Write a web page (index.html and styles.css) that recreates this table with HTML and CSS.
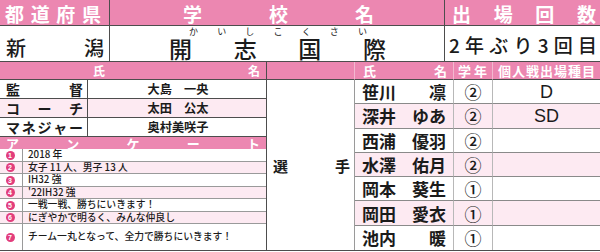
FILE: index.html
```html
<!DOCTYPE html>
<html lang="ja">
<head>
<meta charset="utf-8">
<title>出場校</title>
<link rel="stylesheet" href="styles.css">
</head>
<body>
<div class="sheet">
  <div class="top">
    <div class="hd spread pref-h"><span>都</span><span>道</span><span>府</span><span>県</span></div>
    <div class="hd spread school-h"><span>学</span><span>校</span><span>名</span></div>
    <div class="hd spread count-h last"><span>出</span><span>場</span><span>回</span><span>数</span></div>
    <div class="cell spread pref"><span>新</span><span>潟</span></div>
    <div class="cell school">
      <div class="ruby spread"><span>か</span><span>い</span><span>し</span><span>こ</span><span>く</span><span>さ</span><span>い</span></div>
      <div class="kanji spread"><span>開</span><span>志</span><span>国</span><span>際</span></div>
    </div>
    <div class="cell spread count last"><span>2</span><span>年</span><span>ぶ</span><span>り</span><span>3</span><span>回</span><span>目</span></div>
  </div>

  <div class="bottom">
    <div class="staff">
      <div class="srow shead">
        <div class="slabel"></div>
        <div class="spread sname-h"><span>氏</span><span>名</span></div>
      </div>
      <div class="srow">
        <div class="slabel spread"><span>監</span><span>督</span></div>
        <div class="sname">大島　一央</div>
      </div>
      <div class="srow alt">
        <div class="slabel spread"><span>コ</span><span>ー</span><span>チ</span></div>
        <div class="sname">太田　公太</div>
      </div>
      <div class="srow">
        <div class="slabel spread"><span>マ</span><span>ネ</span><span>ジ</span><span>ャ</span><span>ー</span></div>
        <div class="sname">奥村美咲子</div>
      </div>
      <div class="ahead spread"><span>ア</span><span>ン</span><span>ケ</span><span>ー</span><span>ト</span></div>
      <div class="items">
        <div class="item"><div class="num"><span class="badge">1</span></div><div class="itext">2018 年</div></div>
        <div class="item alt"><div class="num"><span class="badge">2</span></div><div class="itext">女子 11 人、男子 13 人</div></div>
        <div class="item"><div class="num"><span class="badge">3</span></div><div class="itext">IH32 強</div></div>
        <div class="item alt"><div class="num"><span class="badge">4</span></div><div class="itext">'22IH32 強</div></div>
        <div class="item"><div class="num"><span class="badge">5</span></div><div class="itext">一戦一戦、勝ちにいきます！</div></div>
        <div class="item alt"><div class="num"><span class="badge">6</span></div><div class="itext">にぎやかで明るく、みんな仲良し</div></div>
        <div class="item last"><div class="num"><span class="badge">7</span></div><div class="itext">チーム一丸となって、全力で勝ちにいきます！</div></div>
      </div>
    </div>

    <div class="players">
      <div class="ph ph-sel"></div>
      <div class="ph spread ph-name"><span>氏</span><span>名</span></div>
      <div class="ph spread ph-grade"><span>学</span><span>年</span></div>
      <div class="ph spread ph-event"><span>個</span><span>人</span><span>戦</span><span>出</span><span>場</span><span>種</span><span>目</span></div>

      <div class="sel spread"><span>選</span><span>手</span></div>

      <div class="pname spread"><span>笹川</span><span>凛</span></div>
      <div class="pgrade">②</div>
      <div class="pevent">D</div>

      <div class="pname spread alt"><span>深井</span><span>ゆあ</span></div>
      <div class="pgrade alt">②</div>
      <div class="pevent alt">SD</div>

      <div class="pname spread"><span>西浦</span><span>優羽</span></div>
      <div class="pgrade">②</div>
      <div class="pevent"></div>

      <div class="pname spread alt"><span>水澤</span><span>佑月</span></div>
      <div class="pgrade alt">②</div>
      <div class="pevent alt"></div>

      <div class="pname spread"><span>岡本</span><span>葵生</span></div>
      <div class="pgrade">①</div>
      <div class="pevent"></div>

      <div class="pname spread alt"><span>岡田</span><span>愛衣</span></div>
      <div class="pgrade alt">①</div>
      <div class="pevent alt"></div>

      <div class="pname spread lastrow"><span>池内</span><span>暖</span></div>
      <div class="pgrade lastrow">①</div>
      <div class="pevent lastrow"></div>
    </div>
  </div>
</div>
</body>
</html>
```

FILE: styles.css
```css
* {
  box-sizing: border-box;
  margin: 0;
  padding: 0;
}

body {
  margin: 0;
  background: #ffffff;
  font-family: "Noto Sans CJK JP", "Noto Sans", sans-serif;
  color: #1b1b1b;
}

.sheet {
  width: 600px;
  height: 252px;
}

.spread {
  display: flex;
  justify-content: space-between;
  align-items: center;
}

/* ---------- top section ---------- */
.top {
  display: grid;
  grid-template-columns: 110px 335px 155px;
  grid-template-rows: 26px 36px;
}

.top > div {
  border-right: 1px solid #4d4d4d;
  border-bottom: 1px solid #4d4d4d;
}

.top > .last {
  border-right: none;
}

.hd {
  background: #ec87b1;
  color: #ffffff;
  font-weight: 700;
  font-size: 19px;
  line-height: 1;
  padding-top: 1px;
}

.pref-h { padding-left: 5px; padding-right: 8px; }
.school-h { padding-left: 73px; padding-right: 70px; }
.count-h { padding-left: 7px; padding-right: 4px; }

.cell {
  background: #ffffff;
  line-height: 1;
}

.pref {
  font-size: 20px;
  font-weight: 500;
  padding: 8px 5px 0 6px;
}

.school {
  display: flex;
  flex-direction: column;
  padding-top: 2px;
}

.ruby {
  font-size: 9px;
  line-height: 8px;
  height: 8px;
  padding: 0 77px 0 79px;
}

.kanji {
  font-size: 23px;
  line-height: 21px;
  height: 21px;
  margin-top: 2px;
  font-weight: 500;
  padding: 0 58px 0 59px;
}

.count {
  font-size: 19px;
  font-weight: 500;
  padding: 2px 3px 0 4px;
}

/* ---------- bottom section ---------- */
.bottom {
  display: grid;
  grid-template-columns: 267px 333px;
  height: 189px;
}

.staff {
  display: grid;
  grid-template-rows: 18px 19px 19px 19px 12px 1fr;
  border-right: 1px solid #4d4d4d;
}

.srow {
  display: grid;
  grid-template-columns: 88px 1fr;
  border-bottom: 1px solid #4d4d4d;
  line-height: 1;
}

.srow.alt {
  background: #fdeaf2;
}

.shead {
  background: #ec87b1;
  color: #ffffff;
  font-weight: 700;
  font-size: 12px;
}

.sname-h {
  padding: 0 6px 0 5px;
}

.slabel {
  border-right: 1px solid #4d4d4d;
  font-size: 14px;
  font-weight: 700;
  padding: 0 4px 0 6px;
}

.shead .slabel {
  border-right: none;
}

.sname {
  display: flex;
  align-items: center;
  justify-content: center;
  font-size: 12.2px;
  font-weight: 700;
  padding-left: 2px;
}

.ahead {
  background: #ec87b1;
  color: #ffffff;
  font-weight: 700;
  font-size: 13px;
  line-height: 1;
  padding: 0 6px 0 6px;
}

.items {
  display: grid;
  grid-template-rows: 13px 12px 13px 12px 13px 12px 1fr;
  border-bottom: 1px solid #4d4d4d;
}

.item {
  display: grid;
  grid-template-columns: 23px 1fr;
  border-bottom: 1px solid #9a9a9a;
  line-height: 1;
}

.item.alt {
  background: #fdeaf2;
}

.item.last {
  border-bottom: none;
}

.num {
  display: flex;
  align-items: center;
  justify-content: center;
  border-right: 1px solid #9a9a9a;
  padding-right: 2px;
}

.badge {
  display: block;
  width: 9px;
  height: 9px;
  border-radius: 50%;
  background: #e23d7c;
  color: #ffffff;
  font-family: "Liberation Sans", sans-serif;
  font-weight: 700;
  font-size: 7px;
  line-height: 9px;
  text-align: center;
}

.itext {
  display: flex;
  align-items: center;
  padding-left: 5px;
  font-size: 9.8px;
  font-weight: 500;
}

/* ---------- players ---------- */
.players {
  display: grid;
  grid-template-columns: 88px 99px 39px 107px;
  grid-template-rows: 18px repeat(7, 1fr);
  border-bottom: 1px solid #4d4d4d;
}

.ph {
  background: #ec87b1;
  color: #ffffff;
  font-weight: 700;
  font-size: 13px;
  line-height: 1;
  border-bottom: 1px solid #4d4d4d;
  border-right: 1px solid #f3b8d0;
}

.ph-event {
  border-right: none;
  padding: 0 5px 0 5px;
}

.ph-name { padding: 0 6px 0 8px; }
.ph-grade { padding: 0 5px 0 4px; }

.sel {
  grid-row: 2 / 9;
  grid-column: 1;
  border-right: 1px solid #9a9a9a;
  font-size: 15px;
  font-weight: 700;
  line-height: 1;
  padding: 0 4px 0 6px;
}

.pname,
.pgrade,
.pevent {
  border-bottom: 1px solid #8a8a8a;
  line-height: 1;
}

.pname.lastrow,
.pgrade.lastrow,
.pevent.lastrow {
  border-bottom: none;
}

.alt {
  background: #fdeaf2;
}

.pname {
  font-size: 17px;
  font-weight: 700;
  padding: 0 7px 0 7px;
  border-right: 1px solid #b8b8b8;
}

.pgrade {
  display: flex;
  align-items: center;
  justify-content: center;
  font-size: 17px;
  font-weight: 500;
  border-right: 1px solid #b8b8b8;
}

.pevent {
  display: flex;
  align-items: center;
  justify-content: center;
  font-family: "Liberation Sans", sans-serif;
  font-size: 18px;
}
```
